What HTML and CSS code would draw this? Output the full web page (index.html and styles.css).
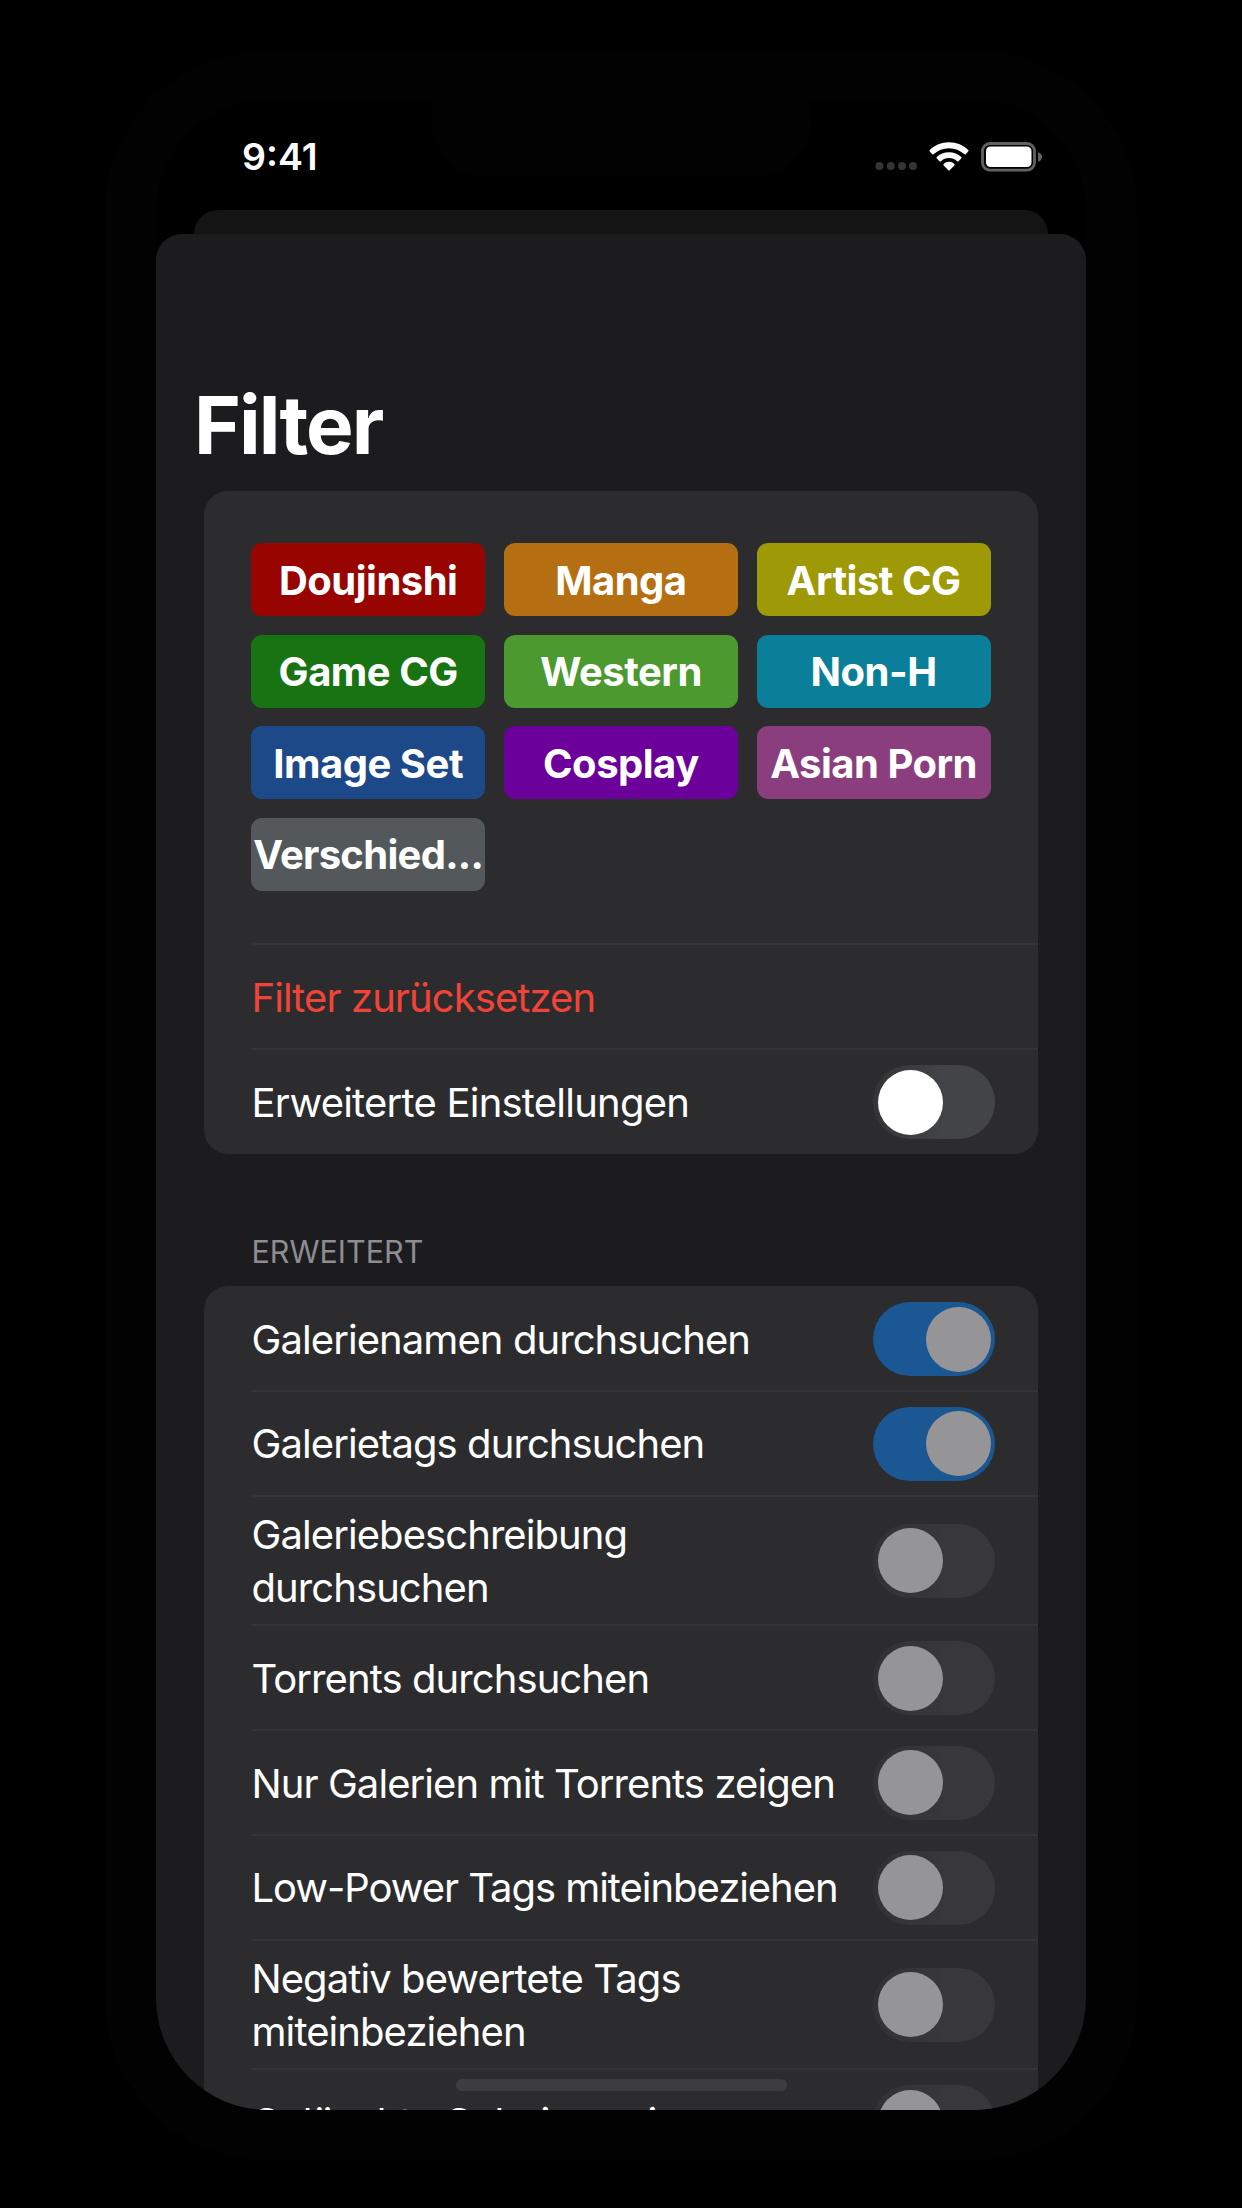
FILE: index.html
```html
<!DOCTYPE html>
<html lang="de">
<head>
<meta charset="utf-8">
<title>Filter</title>
<link rel="stylesheet" href="styles.css">
</head>
<body>
<div class="device">
  <div class="notch"></div>
  <main class="screen">
    <header class="status">
      <span class="time">9:41</span>
      <div class="status-icons">
        <svg class="cell" width="42" height="10" viewBox="0 0 42 10" fill="#343434"><circle cx="4.5" cy="5" r="4"/><circle cx="15.8" cy="5" r="4"/><circle cx="27" cy="5" r="4"/><circle cx="38" cy="5" r="4"/></svg>
        <svg class="wifi" width="40" height="30" viewBox="0 0 40 30" fill="#fff"><path d="M20 .3C27.600 .3 34.400 3.300 39.200 7.900Q40 8.700 39.200 9.500L36.700 12.200Q36 12.800 35.200 12.100C31.200 8.400 25.900 6.200 20 6.200S8.800 8.400 4.800 12.100Q4 12.800 3.300 12.200L.8 9.500Q0 8.700 .8 7.900C5.600 3.300 12.400 .3 20 .3Z"/><path d="M20 10.200C24.800 10.200 29.200 12 32.200 15Q33 15.800 32.200 16.600L29.500 19.300Q28.800 19.900 28 19.200C25.900 17.200 23.100 16 20 16S14.100 17.200 12 19.200Q11.200 19.900 10.500 19.300L7.800 16.600Q7 15.800 7.800 15C10.800 12 15.200 10.200 20 10.200Z"/><path d="M20 19.800C22.100 19.800 24 20.600 25.300 21.900Q26.100 22.700 25.300 23.500L20.700 28.200Q20 28.900 19.300 28.200L14.700 23.500Q13.900 22.700 14.700 21.900C16 20.600 17.900 19.800 20 19.800Z"/></svg>
        <svg class="battery" width="62" height="30" viewBox="0 0 62 30"><rect x="1.500" y="1.500" width="52" height="26.600" rx="7.500" fill="none" stroke="#626264" stroke-width="2.800"/><rect x="5" y="4.500" width="45.500" height="20.600" rx="4.500" fill="#fff"/><path d="M57 10.300Q61 11.500 61 15T57 19.700Z" fill="#626264"/></svg>
      </div>
    </header>
    <div class="backdrop"></div>
    <section class="sheet">
      <h1>Filter</h1>
      <div class="card">
        <div class="chips">
          <span class="chip doujinshi">Doujinshi</span>
          <span class="chip manga">Manga</span>
          <span class="chip artist">Artist CG</span>
          <span class="chip game">Game CG</span>
          <span class="chip western">Western</span>
          <span class="chip nonh">Non-H</span>
          <span class="chip imageset">Image Set</span>
          <span class="chip cosplay">Cosplay</span>
          <span class="chip asian">Asian Porn</span>
          <span class="chip misc">Verschied...</span>
        </div>
        <div class="row danger"><span>Filter zurücksetzen</span></div>
        <div class="row loose"><span>Erweiterte Einstellungen</span><i class="toggle"></i></div>
      </div>
      <h2>ERWEITERT</h2>
      <div class="card disabled">
        <div class="row"><span>Galerienamen durchsuchen</span><i class="toggle on"></i></div>
        <div class="row"><span>Galerietags durchsuchen</span><i class="toggle on"></i></div>
        <div class="row tall"><span>Galeriebeschreibung<br>durchsuchen</span><i class="toggle"></i></div>
        <div class="row"><span>Torrents durchsuchen</span><i class="toggle"></i></div>
        <div class="row"><span>Nur Galerien mit Torrents zeigen</span><i class="toggle"></i></div>
        <div class="row tight"><span>Low-Power Tags miteinbeziehen</span><i class="toggle"></i></div>
        <div class="row tall"><span>Negativ bewertete Tags<br>miteinbeziehen</span><i class="toggle"></i></div>
        <div class="row"><span>Gelöschte Galerien zeigen</span><i class="toggle"></i></div>
      </div>
    </section>
    <div class="home-indicator"></div>
  </main>
</div>
</body>
</html>
```
FILE: styles.css
```css
* { box-sizing: border-box; }
body {
  margin: 0;
  height: 2208px;
  overflow: hidden;
  background: #000;
  color: #fff;
  font-family: Inter, "Liberation Sans", sans-serif;
}
.device {
  position: relative;
  width: 1032px;
  height: 2109px;
  margin: 51px auto 0;
  padding: 48px 51px 50px;
  border-radius: 160px;
  background: #020202;
}
.notch {
  position: absolute;
  z-index: 1;
  top: 46px;
  left: 327px;
  width: 378px;
  height: 79px;
  border-radius: 0 0 52px 52px;
  background: #020202;
}
.screen {
  position: relative;
  display: flex;
  flex-direction: column;
  height: 2011px;
  overflow: hidden;
  border-radius: 112px;
  background: #000;
}
.status {
  flex: none;
  display: flex;
  justify-content: space-between;
  height: 111px;
  padding: 0 43px 0 86px;
}
.time {
  margin-top: 35px;
  font-size: 37.500px;
  line-height: 46px;
  font-weight: 600;
}
.status-icons { display: flex; align-items: flex-start; padding-top: 43px; }
.cell { margin: 19px 12px 0 0; }
.wifi { margin-right: 12px; }
.backdrop {
  flex: none;
  height: 48px;
  margin: 0 38.500px -24px 38px;
  border-radius: 24px 24px 0 0;
  background: #141414;
}
.sheet {
  position: relative;
  flex: none;
  height: 1900px;
  padding: 136px 48px 0;
  border-radius: 26px 26px 0 0;
  background: #1c1c1e;
}
h1 {
  margin: 0 0 0 -10px;
  height: 121px;
  font-size: 80px;
  line-height: 109px;
  font-weight: 700;
  letter-spacing: -2px;
}
h2 {
  margin: 0;
  height: 132px;
  padding: 79px 0 0 47.500px;
  font-size: 30.500px;
  line-height: 37px;
  font-weight: 400;
  color: #8d8d92;
}
.card {
  overflow: hidden;
  padding-bottom: 1px;
  border-radius: 24px;
  background: #2c2c2e;
}
.chips {
  display: grid;
  grid-template-columns: repeat(3, 234px);
  grid-auto-rows: 73px;
  gap: 18.500px;
  column-gap: 18.700px;
  padding: 52px 0 52.500px 47.200px;
  height: 452.400px;
}
.chip {
  display: flex;
  align-items: center;
  justify-content: center;
  padding-top: 1px;
  border-radius: 11px;
  font-size: 40px;
  font-weight: 700;
  letter-spacing: -0.500px;
  white-space: nowrap;
}
.doujinshi { background: #980500; }
.manga { background: #b66e13; }
.artist { background: #9e9906; }
.game { background: #187313; }
.western { background: #4b992f; }
.nonh { background: #0b7f99; }
.imageset { background: #1e4988; }
.cosplay { background: #6b009a; }
.asian { background: #8b3e7e; }
.misc {
  background: #53595b;
  letter-spacing: -0.700px;
}
.row {
  display: flex;
  align-items: center;
  justify-content: space-between;
  height: 104.800px;
  margin-left: 47.500px;
  padding-right: 43px;
  border-top: 2px solid #343436;
  font-size: 40px;
  line-height: 52.400px;
  letter-spacing: -0.920px;
  white-space: nowrap;
}
.row span { padding-top: 3px; }
.disabled .row:first-child {
  height: 103.800px;
  border-top-color: transparent;
}
.loose { letter-spacing: -0.770px; }
.tight { letter-spacing: -1.050px; }
.tall { height: 129.600px; }
.danger { color: #f04438; }
.toggle {
  flex: none;
  width: 122px;
  height: 74px;
  margin-top: 1px;
  padding: 4.500px;
  border-radius: 37px;
  background: linear-gradient(90deg, #353537, #434447 60%);
}
.toggle::before {
  content: "";
  display: block;
  width: 65px;
  height: 65px;
  border-radius: 50%;
  background: #fff;
}
.disabled .toggle { background: linear-gradient(90deg, #323234, #38383a 60%); }
.disabled .toggle::before { background: #959597; }
.disabled .toggle.on { background: #1a5793; }
.toggle.on::before { margin-left: 48px; }
.home-indicator {
  position: absolute;
  left: 300px;
  bottom: 19px;
  width: 331px;
  height: 12px;
  border-radius: 6px;
  background: #3d3d3f;
}
```
